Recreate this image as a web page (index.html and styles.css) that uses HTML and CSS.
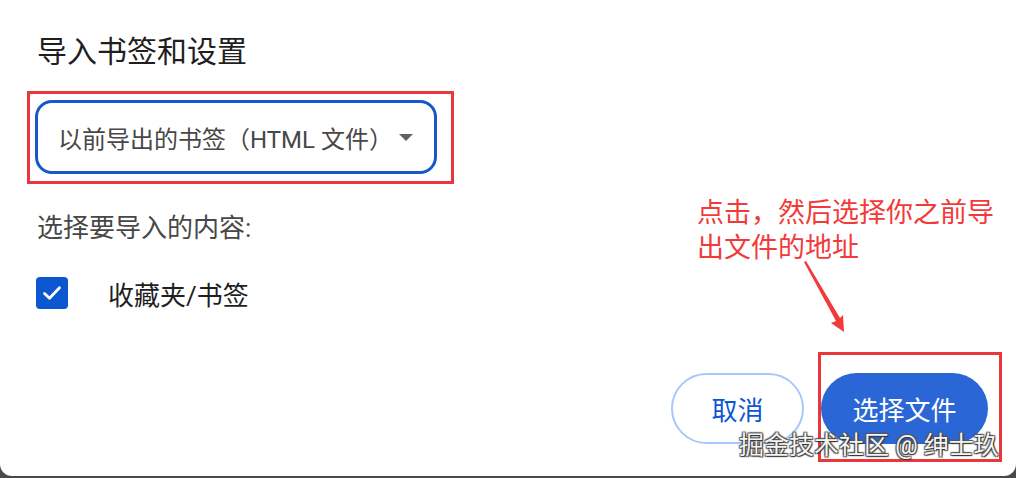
FILE: index.html
```html
<!DOCTYPE html>
<html lang="zh-CN">
<head>
<meta charset="utf-8">
<title>导入书签和设置</title>
<link rel="stylesheet" href="styles.css">
</head>
<body>
<div class="dialog">
  <h1 class="title">导入书签和设置</h1>
  <div class="mark-box">
    <div class="select">
      <span class="select-text">以前导出的书签（HTML 文件）</span>
      <span class="caret"></span>
    </div>
  </div>
  <p class="label">选择要导入的内容:</p>
  <div class="check-row">
    <span class="checkbox">
      <svg width="20" height="16" viewBox="0 0 20 16"><path d="M2.5 8.5 L7.5 13.2 L17.5 2.8" fill="none" stroke="#fff" stroke-width="2.8" stroke-linecap="round" stroke-linejoin="round"/></svg>
    </span>
    <span class="check-label">收藏夹/书签</span>
  </div>
  <div class="actions">
    <button class="btn btn-cancel">取消</button>
    <button class="btn btn-primary">选择文件</button>
  </div>

  <div class="note">点击，然后选择你之前导<br>出文件的地址</div>
  <svg class="arrow" width="60" height="80" viewBox="0 0 60 80">
    <polygon points="3,2 5,1 39,58 42,55 43,72 30,63 35,61" fill="#f23a3a"/>
  </svg>
  <div class="mark-btn"></div>
  <div class="watermark">掘金技术社区 @ 绅士玖</div>
</div>
</body>
</html>
```
FILE: styles.css
```css
html, body {
  margin: 0;
  padding: 0;
}
body {
  background: #4a4a4a;
  width: 1016px;
  height: 478px;
  overflow: hidden;
  font-family: Roboto, "Noto Sans CJK SC", "Noto Sans", sans-serif;
}
.dialog {
  position: relative;
  height: 476px;
  background: #fff;
  border-radius: 0 0 12px 12px;
  display: flex;
  flex-direction: column;
  box-sizing: border-box;
}
.title {
  margin: 34px 0 0 37px;
  font-size: 30px;
  line-height: 36px;
  font-weight: 400;
  color: #1f1f1f;
}
.mark-box {
  margin: 21px 0 0 27px;
  width: 427px;
  box-sizing: border-box;
  border: 3px solid #e8383d;
  padding: 6px 14px 7px 5px;
}
.select {
  height: 74px;
  box-sizing: border-box;
  border: 3px solid #1558c9;
  border-radius: 17px;
  display: flex;
  align-items: center;
  padding: 0 21px 0 20px;
}
.select-text {
  flex: 1;
  font-size: 24px;
  color: #474747;
  white-space: nowrap;
}
.caret {
  width: 0;
  height: 0;
  border-left: 7px solid transparent;
  border-right: 7px solid transparent;
  border-top: 7px solid #5f6368;
}
.label {
  margin: 28px 0 0 37px;
  font-size: 26px;
  line-height: 32px;
  color: #474747;
}
.check-row {
  margin: 33px 0 0 36px;
  display: flex;
  align-items: center;
  height: 32px;
}
.checkbox {
  width: 32px;
  height: 32px;
  border-radius: 4px;
  background: #0b57d0;
  display: flex;
  align-items: center;
  justify-content: center;
}
.check-label {
  margin-left: 40px;
  font-size: 26px;
  color: #1f1f1f;
}
.actions {
  margin: 64px 28px 0 0;
  display: flex;
  justify-content: flex-end;
  gap: 17px;
}
.btn {
  height: 71px;
  border-radius: 36px;
  font-family: inherit;
  font-size: 26px;
  padding: 0;
  cursor: pointer;
}
.btn-cancel {
  width: 133px;
  background: #fff;
  border: 2px solid #a8c7fa;
  color: #0b57d0;
}
.btn-primary {
  width: 167px;
  background: #2a66d6;
  border: none;
  color: #fff;
}
.note {
  position: absolute;
  left: 697px;
  top: 196px;
  font-size: 27px;
  line-height: 35px;
  color: #f23a3a;
}
.arrow {
  position: absolute;
  left: 801px;
  top: 260px;
}
.mark-btn {
  position: absolute;
  left: 818px;
  top: 352px;
  width: 184px;
  height: 110px;
  box-sizing: border-box;
  border: 3px solid #e8383d;
}
.watermark {
  position: absolute;
  left: 739px;
  top: 428px;
  font-size: 25px;
  line-height: 36px;
  color: #f4f4f4;
  white-space: nowrap;
  text-shadow: 1px 1px 1px #333, -1px -1px 1px #555, 1px -1px 1px #555, -1px 1px 1px #555;
}
```
